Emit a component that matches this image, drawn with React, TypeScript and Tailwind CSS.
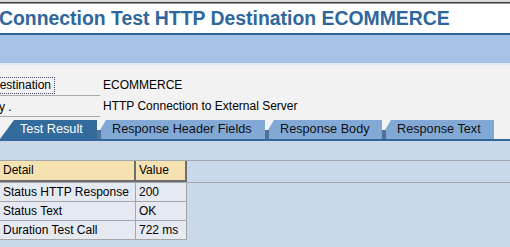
import React from "react";

const font = { fontFamily: '"Liberation Sans", Arial, sans-serif' };

function Tab({
  label,
  width,
  active,
}: {
  label: string;
  width: number;
  active?: boolean;
}) {
  if (active) {
    return (
      <div
        className="relative h-[19px] shrink-0 bg-[#336b9c] text-white text-[12.7px] leading-[19px] whitespace-nowrap"
        style={{ width, clipPath: "polygon(0 100%, 14px 0, 100% 0, 100% 100%)" }}
      >
        <span className="absolute left-[20px] top-0">{label}</span>
      </div>
    );
  }
  return (
    <div className="relative h-[19px] shrink-0 whitespace-nowrap" style={{ width }}>
      <div
        className="absolute inset-0 bg-[#82a9d6]"
        style={{ clipPath: "polygon(3px 100%, 3px 10px, 9px 0, 100% 0, 100% 100%)" }}
      />
      <div className="absolute left-0 bottom-0 w-[4px] h-[9px] bg-[#4d7398]" />
      <span className="absolute left-[15px] top-0 text-[12.7px] leading-[19px] text-[#111]">
        {label}
      </span>
    </div>
  );
}

export default function App() {
  return (
    <div className="w-[510px] h-[247px] overflow-hidden bg-[#cad9e9] flex flex-col" style={font}>
      {/* top strip */}
      <div className="h-[2px] bg-[#d9d9d9]" />
      <div className="h-[1px] bg-[#3a3a3a]" />
      <div className="h-[1px] bg-[#9c9c9c]" />
      {/* title */}
      <div className="h-[29px] bg-white flex items-center overflow-hidden">
        <div className="whitespace-nowrap text-[19.4px] font-bold text-[#2f679c] leading-none -ml-[1px] pt-[1px]">
          Connection Test HTTP Destination ECOMMERCE
        </div>
      </div>
      <div className="h-[2px] bg-[#2e6496]" />
      {/* toolbar band */}
      <div className="h-[28px] bg-[#a5c3e4]" />
      <div className="h-[2px] bg-[#dfe9f4]" />
      {/* gray area */}
      <div className="bg-[#f2f2f2] flex flex-col pt-[10px]">
        <div className="flex h-[21px] items-end whitespace-nowrap">
          <div className="w-[100px] h-[21px] border-b border-[#a9a9a9] overflow-hidden relative">
            <span className="absolute left-[-10px] top-[3px] text-[12px] leading-[15px] text-black outline-1 outline-dotted outline-[#4a4a6a] pl-[1px] pr-[3px]">
              Destination
            </span>
          </div>
          <div className="pl-[3px] text-[12px] leading-[21px] text-black">ECOMMERCE</div>
        </div>
        <div className="flex h-[21px] items-end whitespace-nowrap">
          <div className="w-[100px] h-[21px] border-b border-[#a9a9a9] overflow-hidden relative">
            <span className="absolute left-[-1px] top-[4px] text-[12px] leading-[15px] text-black">y .</span>
          </div>
          <div className="pl-[3px] text-[12px] leading-[21px] text-black">
            HTTP Connection to External Server
          </div>
        </div>
        <div className="flex h-[19px] mt-[3px]">
          <Tab label="Test Result" width={97} active />
          <Tab label="Response Header Fields" width={168} />
          <Tab label="Response Body" width={117} />
          <Tab label="Response Text" width={112} />
        </div>
        <div className="h-[2px] bg-[#336699]" />
      </div>
      {/* content */}
      <div className="pt-[19px] text-[12px] text-black whitespace-nowrap">
        <div className="flex h-[23px] border-t border-b border-[#a3a8ae]">
          <div className="w-[136px] bg-[#f6e2b0] border-r-2 border-b-2 border-[#6e6e6e] pl-[3px] leading-[19px]">
            Detail
          </div>
          <div className="w-[51px] bg-[#f6e2b0] border-r-2 border-b-2 border-[#6e6e6e] pl-[3px] leading-[19px]">
            Value
          </div>
        </div>
        {[
          ["Status HTTP Response", "200"],
          ["Status Text", "OK"],
          ["Duration Test Call", "722 ms"],
        ].map(([a, b]) => (
          <div key={a} className="flex h-[19px]">
            <div className="w-[136px] bg-[#e5eaf2] border-r border-b border-[#a5a5a5] pl-[3px] leading-[18px]">
              {a}
            </div>
            <div className="w-[51px] bg-[#e5eaf2] border-r border-b border-[#a5a5a5] pl-[3px] leading-[18px]">
              {b}
            </div>
          </div>
        ))}
      </div>
    </div>
  );
}
